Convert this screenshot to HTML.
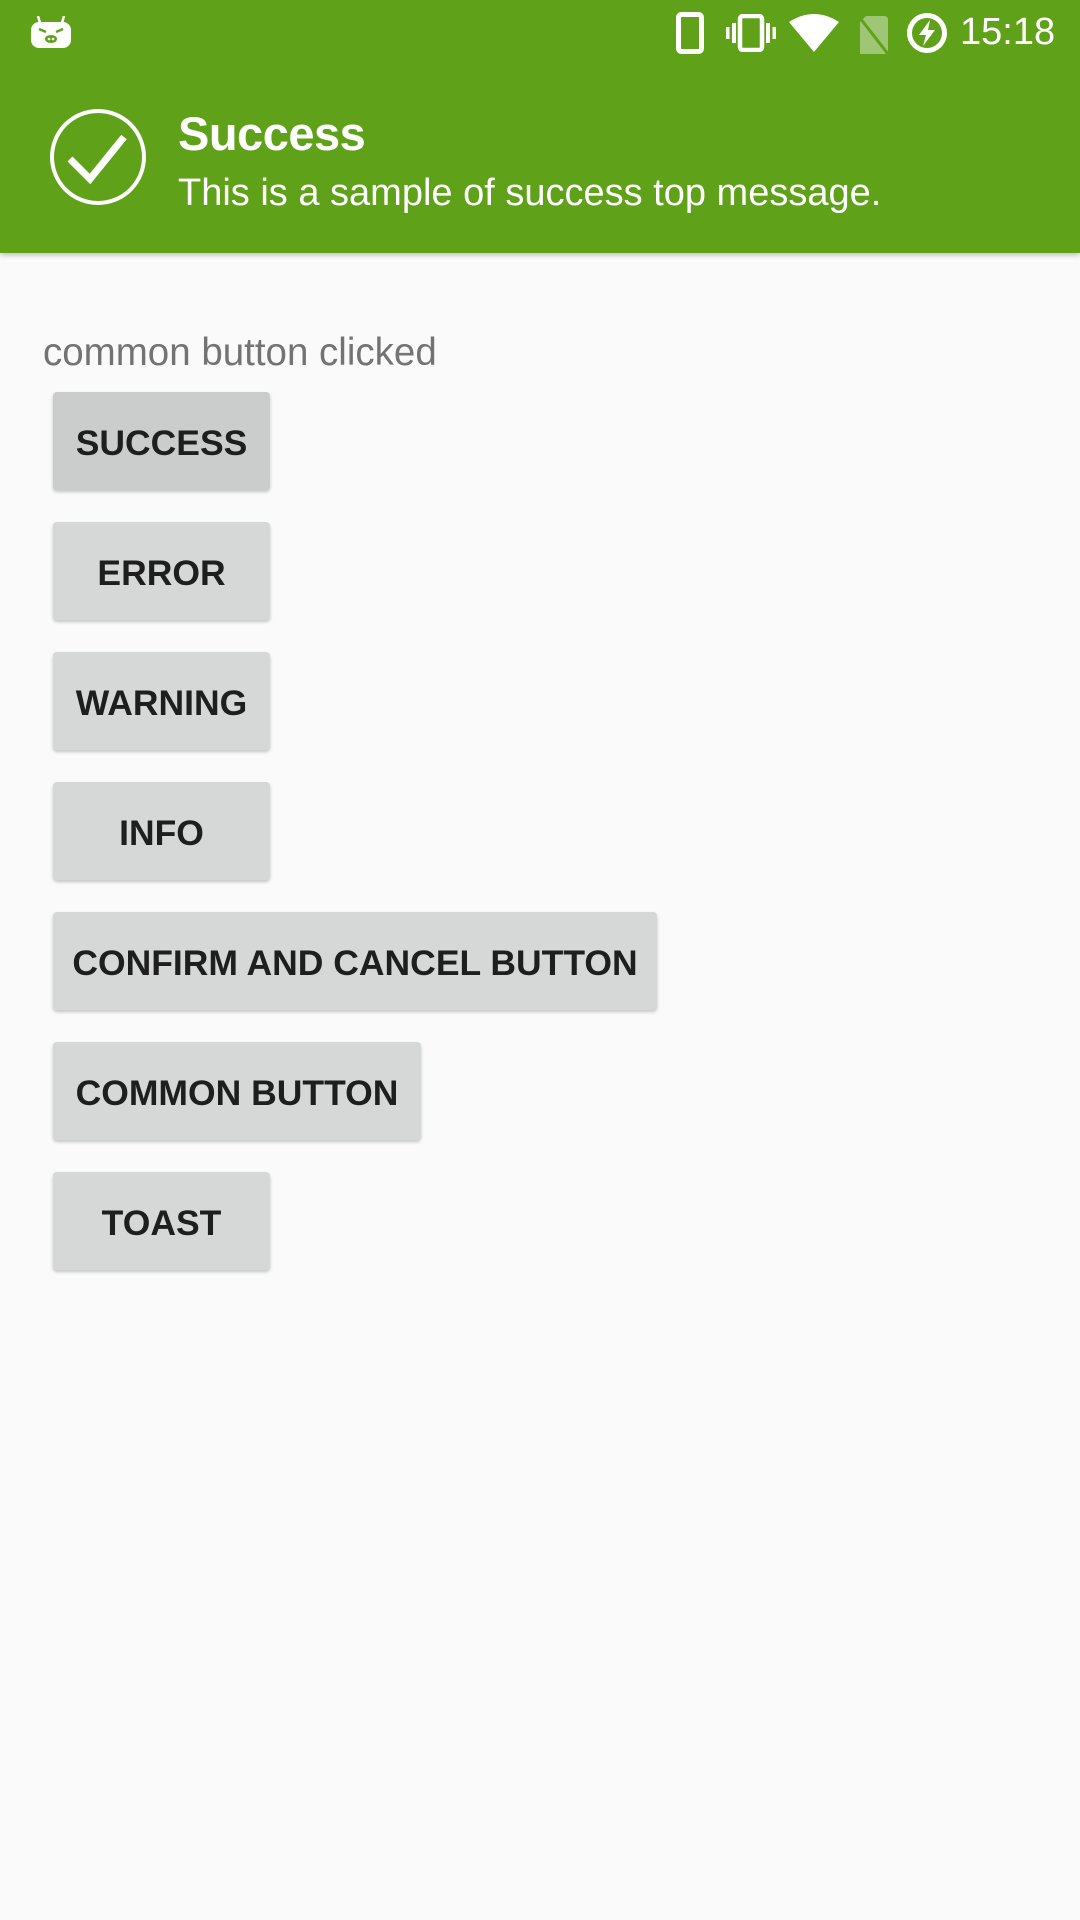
<!DOCTYPE html>
<html><head><meta charset="utf-8">
<style>
html,body{margin:0;padding:0;}
body{width:1080px;height:1920px;background:#fafafa;position:relative;overflow:hidden;font-family:"Liberation Sans",sans-serif;}
.banner{position:absolute;left:0;top:0;width:1080px;height:253px;background:#5fa119;box-shadow:0 2px 5px rgba(0,0,0,0.25);}
.t{position:absolute;color:#fff;white-space:nowrap;}
.lbl{position:absolute;left:43px;top:331px;font-size:38.5px;color:#737373;white-space:nowrap;}
.btn{position:absolute;left:53px;height:98px;background:#d6d7d7;border-radius:4px;box-shadow:0 2px 3px rgba(0,0,0,0.22);display:flex;align-items:center;justify-content:center;font-weight:bold;font-size:35.5px;color:#1e1e1e;letter-spacing:0;white-space:nowrap;padding-top:4px;box-sizing:border-box;}
</style></head><body>
<div class="banner">
  <svg style="position:absolute;left:29px;top:16px" width="44" height="32" viewBox="0 0 44 32">
    <line x1="9" y1="0" x2="11" y2="7" stroke="#fff" stroke-width="2.5"/>
    <line x1="35" y1="0" x2="33" y2="7" stroke="#fff" stroke-width="2.5"/>
    <rect x="2" y="6" width="40" height="26" rx="8" fill="#fff"/>
    <path d="M10 13 L17 16 M34 13 L27 16" stroke="#5fa119" stroke-width="2.5"/>
    <ellipse cx="22" cy="23" rx="6" ry="4" fill="#5fa119"/>
    <circle cx="20" cy="23" r="1.3" fill="#fff"/><circle cx="24" cy="23" r="1.3" fill="#fff"/>
  </svg>
  <svg style="position:absolute;left:676px;top:12px" width="28" height="42" viewBox="0 0 28 42">
    <rect x="2.5" y="2.5" width="23" height="37" rx="3" fill="none" stroke="#fff" stroke-width="5"/>
  </svg>
  <svg style="position:absolute;left:726px;top:14px" width="50" height="38" viewBox="0 0 50 38">
    <rect x="14" y="2" width="22" height="34" rx="3" fill="none" stroke="#fff" stroke-width="4.5"/>
    <rect x="6" y="9" width="4" height="20" fill="#fff"/><rect x="40" y="9" width="4" height="20" fill="#fff"/>
    <rect x="0" y="13" width="3.5" height="12" fill="#fff"/><rect x="46.5" y="13" width="3.5" height="12" fill="#fff"/>
  </svg>
  <svg style="position:absolute;left:789px;top:14px" width="50" height="38" viewBox="0 0 50 38">
    <path d="M0 8 Q25 -8 50 8 L25 38 Z" fill="#fff"/>
  </svg>
  <svg style="position:absolute;left:858px;top:16px" width="32" height="38" viewBox="0 0 32 38">
    <path d="M8 0 H26 Q30 0 30 4 V38 H2 V6 Z" fill="rgba(255,255,255,0.4)"/>
    <line x1="2" y1="2" x2="30" y2="38" stroke="#5fa119" stroke-width="3"/>
  </svg>
  <svg style="position:absolute;left:905px;top:12px" width="44" height="42" viewBox="0 0 44 42">
    <circle cx="22" cy="21" r="17.5" fill="none" stroke="#fff" stroke-width="5"/>
    <path d="M25 8 L14 23 H21 L18 34 L30 18 H23 Z" fill="#fff"/>
  </svg>
  <div class="t" style="left:960px;top:11px;font-size:38px;">15:18</div>
  <svg style="position:absolute;left:48px;top:107px" width="100" height="100" viewBox="0 0 100 100">
    <circle cx="50" cy="50" r="46" fill="none" stroke="#fff" stroke-width="4"/>
    <path d="M22 52 L42 72 L76 30" fill="none" stroke="#fff" stroke-width="7"/>
  </svg>
  <div class="t" style="left:178px;top:106px;font-size:47px;font-weight:bold;letter-spacing:-0.5px;">Success</div>
  <div class="t" style="left:178px;top:172px;font-size:38px;">This is a sample of success top message.</div>
</div>
<div class="lbl">common button clicked</div>
<div class="btn" style="top:392px;width:217px;background:#cbcccc;">SUCCESS</div>
<div class="btn" style="top:522px;width:217px;">ERROR</div>
<div class="btn" style="top:652px;width:217px;">WARNING</div>
<div class="btn" style="top:782px;width:217px;">INFO</div>
<div class="btn" style="top:912px;width:604px;">CONFIRM AND CANCEL BUTTON</div>
<div class="btn" style="top:1042px;width:368px;">COMMON BUTTON</div>
<div class="btn" style="top:1172px;width:217px;">TOAST</div>
</body></html>
